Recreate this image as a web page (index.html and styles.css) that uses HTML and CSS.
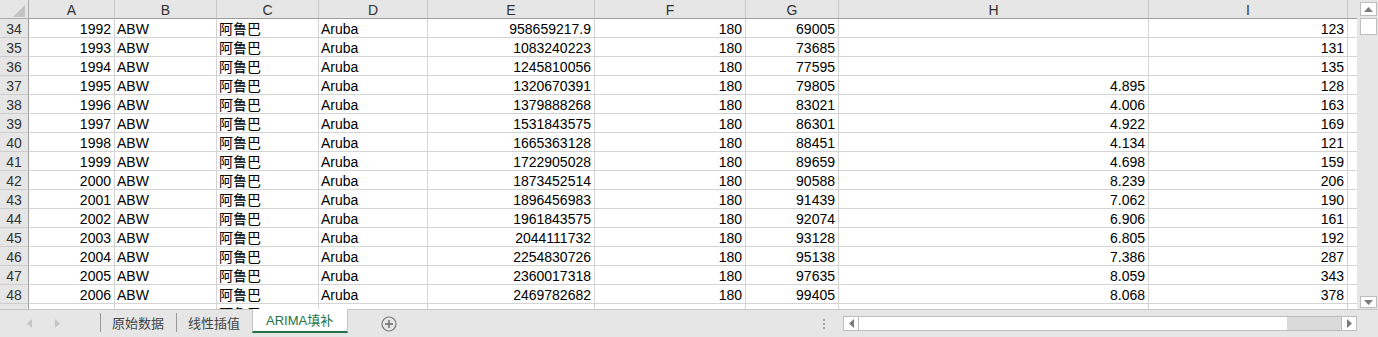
FILE: index.html
```html
<!DOCTYPE html>
<html lang="zh-CN">
<head>
<meta charset="utf-8">
<title>ARIMA填补</title>
<link rel="stylesheet" href="styles.css">
</head>
<body>
<div class="app">
  <div class="main">
    <div class="sheet">
      <div class="corner"><span class="tri"></span></div>
      <div class="ch">A</div><div class="ch">B</div><div class="ch">C</div><div class="ch">D</div><div class="ch">E</div><div class="ch">F</div><div class="ch">G</div><div class="ch">H</div><div class="ch">I</div><div class="ch last"></div>

      <div class="rh">34</div><div class="c n">1992</div><div class="c">ABW</div><div class="c cjk">阿鲁巴</div><div class="c">Aruba</div><div class="c n">958659217.9</div><div class="c n">180</div><div class="c n">69005</div><div class="c n"></div><div class="c n">123</div><div class="c last"></div>
      <div class="rh">35</div><div class="c n">1993</div><div class="c">ABW</div><div class="c cjk">阿鲁巴</div><div class="c">Aruba</div><div class="c n">1083240223</div><div class="c n">180</div><div class="c n">73685</div><div class="c n"></div><div class="c n">131</div><div class="c last"></div>
      <div class="rh">36</div><div class="c n">1994</div><div class="c">ABW</div><div class="c cjk">阿鲁巴</div><div class="c">Aruba</div><div class="c n">1245810056</div><div class="c n">180</div><div class="c n">77595</div><div class="c n"></div><div class="c n">135</div><div class="c last"></div>
      <div class="rh">37</div><div class="c n">1995</div><div class="c">ABW</div><div class="c cjk">阿鲁巴</div><div class="c">Aruba</div><div class="c n">1320670391</div><div class="c n">180</div><div class="c n">79805</div><div class="c n">4.895</div><div class="c n">128</div><div class="c last"></div>
      <div class="rh">38</div><div class="c n">1996</div><div class="c">ABW</div><div class="c cjk">阿鲁巴</div><div class="c">Aruba</div><div class="c n">1379888268</div><div class="c n">180</div><div class="c n">83021</div><div class="c n">4.006</div><div class="c n">163</div><div class="c last"></div>
      <div class="rh">39</div><div class="c n">1997</div><div class="c">ABW</div><div class="c cjk">阿鲁巴</div><div class="c">Aruba</div><div class="c n">1531843575</div><div class="c n">180</div><div class="c n">86301</div><div class="c n">4.922</div><div class="c n">169</div><div class="c last"></div>
      <div class="rh">40</div><div class="c n">1998</div><div class="c">ABW</div><div class="c cjk">阿鲁巴</div><div class="c">Aruba</div><div class="c n">1665363128</div><div class="c n">180</div><div class="c n">88451</div><div class="c n">4.134</div><div class="c n">121</div><div class="c last"></div>
      <div class="rh">41</div><div class="c n">1999</div><div class="c">ABW</div><div class="c cjk">阿鲁巴</div><div class="c">Aruba</div><div class="c n">1722905028</div><div class="c n">180</div><div class="c n">89659</div><div class="c n">4.698</div><div class="c n">159</div><div class="c last"></div>
      <div class="rh">42</div><div class="c n">2000</div><div class="c">ABW</div><div class="c cjk">阿鲁巴</div><div class="c">Aruba</div><div class="c n">1873452514</div><div class="c n">180</div><div class="c n">90588</div><div class="c n">8.239</div><div class="c n">206</div><div class="c last"></div>
      <div class="rh">43</div><div class="c n">2001</div><div class="c">ABW</div><div class="c cjk">阿鲁巴</div><div class="c">Aruba</div><div class="c n">1896456983</div><div class="c n">180</div><div class="c n">91439</div><div class="c n">7.062</div><div class="c n">190</div><div class="c last"></div>
      <div class="rh">44</div><div class="c n">2002</div><div class="c">ABW</div><div class="c cjk">阿鲁巴</div><div class="c">Aruba</div><div class="c n">1961843575</div><div class="c n">180</div><div class="c n">92074</div><div class="c n">6.906</div><div class="c n">161</div><div class="c last"></div>
      <div class="rh">45</div><div class="c n">2003</div><div class="c">ABW</div><div class="c cjk">阿鲁巴</div><div class="c">Aruba</div><div class="c n">2044111732</div><div class="c n">180</div><div class="c n">93128</div><div class="c n">6.805</div><div class="c n">192</div><div class="c last"></div>
      <div class="rh">46</div><div class="c n">2004</div><div class="c">ABW</div><div class="c cjk">阿鲁巴</div><div class="c">Aruba</div><div class="c n">2254830726</div><div class="c n">180</div><div class="c n">95138</div><div class="c n">7.386</div><div class="c n">287</div><div class="c last"></div>
      <div class="rh">47</div><div class="c n">2005</div><div class="c">ABW</div><div class="c cjk">阿鲁巴</div><div class="c">Aruba</div><div class="c n">2360017318</div><div class="c n">180</div><div class="c n">97635</div><div class="c n">8.059</div><div class="c n">343</div><div class="c last"></div>
      <div class="rh">48</div><div class="c n">2006</div><div class="c">ABW</div><div class="c cjk">阿鲁巴</div><div class="c">Aruba</div><div class="c n">2469782682</div><div class="c n">180</div><div class="c n">99405</div><div class="c n">8.068</div><div class="c n">378</div><div class="c last"></div>
      <div class="rh"></div><div class="c n"></div><div class="c"></div><div class="c cjk">阿鲁巴</div><div class="c"></div><div class="c n"></div><div class="c n"></div><div class="c n"></div><div class="c n"></div><div class="c n"></div><div class="c last"></div>
    </div>
    <div class="vscroll">
      <div class="vbtn"><svg width="9" height="5" viewBox="0 0 9 5"><path d="M0 5 L4.5 0 L9 5 Z" fill="#7b7b7b"/></svg></div>
      <div class="vthumb"></div>
      <div class="vtrack"></div>
      <div class="vbtn down"><svg width="9" height="5" viewBox="0 0 9 5"><path d="M0 0 L9 0 L4.5 5 Z" fill="#7b7b7b"/></svg></div>
    </div>
  </div>
  <div class="tabbar">
    <div class="nav">
      <svg class="navl" width="5" height="9" viewBox="0 0 5 9"><path d="M5 0 L0 4.5 L5 9 Z" fill="#c6c6c6"/></svg>
      <svg class="navr" width="5" height="9" viewBox="0 0 5 9"><path d="M0 0 L5 4.5 L0 9 Z" fill="#c6c6c6"/></svg>
    </div>
    <div class="tab">原始数据</div>
    <div class="tab">线性插值</div>
    <div class="tab active">ARIMA填补</div>
    <div class="addsheet">
      <svg width="16" height="16" viewBox="0 0 16 16"><circle cx="8" cy="8" r="7" fill="none" stroke="#7a7a7a" stroke-width="1.2"/><path d="M8 4 V12 M4 8 H12" stroke="#6a6a6a" stroke-width="1.4"/></svg>
    </div>
    <div class="tabspace"></div>
    <div class="grip"><span></span><span></span><span></span></div>
    <div class="hscroll">
      <div class="hbtn"><svg width="5" height="9" viewBox="0 0 5 9"><path d="M5 0 L0 4.5 L5 9 Z" fill="#7b7b7b"/></svg></div>
      <div class="hthumb"></div>
      <div class="htrack"></div>
      <div class="hbtn right"><svg width="5" height="9" viewBox="0 0 5 9"><path d="M0 0 L5 4.5 L0 9 Z" fill="#7b7b7b"/></svg></div>
    </div>
  </div>
</div>
</body>
</html>
```

FILE: styles.css
```css
* { box-sizing: border-box; }
html, body { margin: 0; padding: 0; }
body {
  width: 1378px;
  height: 337px;
  overflow: hidden;
  background: #e6e6e6;
  font-family: "Liberation Sans", Arial, "Noto Sans CJK SC", sans-serif;
  font-size: 14px;
  color: #000;
}
.app { display: flex; flex-direction: column; width: 1378px; height: 337px; }
.main { display: flex; height: 309px; flex: none; }
.sheet {
  display: grid;
  grid-template-columns: 29px 86px 102px 102px 109px 167px 151px 93px 310px 199px 9px;
  grid-auto-rows: 19px;
  width: 1357px;
  height: 309px;
  overflow: hidden;
  background: #fff;
}
.sheet > div {
  border-right: 1px solid #d4d4d4;
  border-bottom: 1px solid #d4d4d4;
  line-height: 20px;
  white-space: nowrap;
  overflow: hidden;
}
.corner {
  position: relative;
  background: #e6e6e6;
  border-right-color: #ababab !important;
  border-bottom-color: #ababab !important;
}
.tri {
  position: absolute;
  right: 3px;
  bottom: 1px;
  width: 0; height: 0;
  border-left: 12px solid transparent;
  border-bottom: 12px solid #c4c4c4;
}
.ch {
  background: #e6e6e6;
  text-align: center;
  color: #333;
  border-right-color: #c8c8c8 !important;
  border-bottom-color: #9e9e9e !important;
}
.ch.last { border-right: none !important; }
.rh {
  background: #e6e6e6;
  text-align: center;
  color: #333;
  border-right-color: #9e9e9e !important;
  border-bottom-color: #cdcdcd !important;
}
.c { padding: 0 3px 0 2px; }
.c.n { text-align: right; }
.c.last { border-right: none !important; }
.cjk { font-family: "Noto Sans CJK SC", sans-serif; font-size: 14px; line-height: 19px !important; }

.vscroll {
  width: 21px;
  height: 309px;
  background: #e6e6e6;
  display: flex;
  flex-direction: column;
  padding: 2px 1px 1px 3px;
}
.vbtn {
  height: 14px;
  width: 17px;
  background: #fff;
  border: 1px solid #bdbdbd;
  display: flex;
  align-items: center;
  justify-content: center;
  flex: none;
}
.vbtn.down { height: 12px; }
.vthumb {
  height: 17px;
  margin-top: 2px;
  width: 17px;
  background: #fff;
  border: 1px solid #bdbdbd;
  flex: none;
}
.vtrack { flex: 1; }

.tabbar {
  height: 28px;
  display: flex;
  align-items: flex-start;
  background: #e6e6e6;
  border-top: 1px solid #c6c6c6;
}
.nav {
  width: 100px;
  height: 27px;
  display: flex;
  align-items: center;
  padding-left: 27px;
  gap: 23px;
  flex: none;
}
.tab {
  height: 19px;
  margin-top: 3px;
  padding: 0 11px;
  border-left: 1px solid #9a9a9a;
  font-family: "Noto Sans CJK SC", sans-serif;
  font-size: 13px;
  line-height: 19px;
  color: #444;
  flex: none;
}
.tab:nth-child(2) { width: 76px; }
.tab:nth-child(3) { width: 76px; }
.tab.active {
  width: 96px;
  height: 24px;
  margin-top: -1px;
  padding: 2px 12px 0 13px;
  background: #fff;
  color: #217346;
  border-left: 1px solid #c6c6c6;
  border-right: 1px solid #c6c6c6;
  border-bottom: 2px solid #217346;
  font-family: "Liberation Sans", Arial, "Noto Sans CJK SC", sans-serif;
  font-size: 13px;
  line-height: 20px;
}
.addsheet {
  margin-left: 33px;
  height: 27px;
  display: flex;
  align-items: center;
  flex: none;
}
.tabspace { flex: 1; }
.grip {
  width: 4px;
  height: 27px;
  display: flex;
  flex-direction: column;
  justify-content: center;
  gap: 2px;
  margin-right: 16px;
  flex: none;
}
.grip span { width: 2px; height: 2px; background: #a6a6a6; display: block; }
.hscroll {
  width: 514px;
  height: 15px;
  margin-top: 6px;
  margin-right: 21px;
  display: flex;
  background: #dadada;
  border: 1px solid #bdbdbd;
  flex: none;
}
.hbtn {
  width: 15px;
  height: 13px;
  background: #fff;
  border-right: 1px solid #bdbdbd;
  display: flex;
  align-items: center;
  justify-content: center;
  flex: none;
}
.hbtn.right { border-right: none; border-left: 1px solid #bdbdbd; }
.hthumb { width: 428px; height: 13px; background: #fff; flex: none; }
.htrack { flex: 1; }
```
